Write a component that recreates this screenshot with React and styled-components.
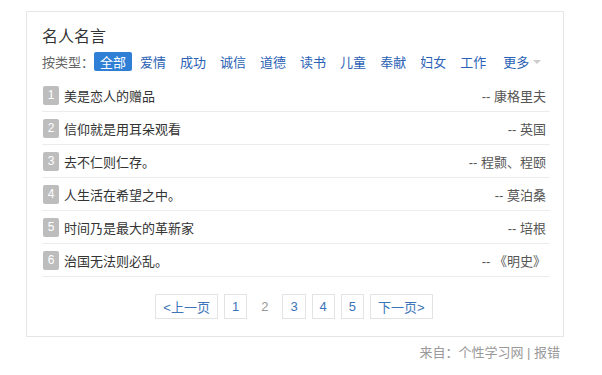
import styled, { createGlobalStyle } from "styled-components";

const quotes = [
  { text: "美是恋人的赠品", author: "-- 康格里夫" },
  { text: "信仰就是用耳朵观看", author: "-- 英国" },
  { text: "去不仁则仁存。", author: "-- 程颢、程颐" },
  { text: "人生活在希望之中。", author: "-- 莫泊桑" },
  { text: "时间乃是最大的革新家", author: "-- 培根" },
  { text: "治国无法则必乱。", author: "-- 《明史》" },
];

const types = ["全部", "爱情", "成功", "诚信", "道德", "读书", "儿童", "奉献", "妇女", "工作"];

const pages = [
  { label: "<上一页", link: true },
  { label: "1", link: true },
  { label: "2", link: false },
  { label: "3", link: true },
  { label: "4", link: true },
  { label: "5", link: true },
  { label: "下一页>", link: true },
];

const App = () => {
  return (
    <Page>
      <GlobalStyle />
      <Card>
        <Title>名人名言</Title>
        <Filter>
          <span className="label">按类型：</span>
          {types.map((t, i) => (
            <TypeItem key={t} $active={i === 0}>
              {t}
            </TypeItem>
          ))}
          <TypeItem $more>
            更多<Caret />
          </TypeItem>
        </Filter>
        <List>
          {quotes.map((q, i) => (
            <Row key={i}>
              <Badge>{i + 1}</Badge>
              <span className="text">{q.text}</span>
              <span className="author">{q.author}</span>
            </Row>
          ))}
        </List>
        <Pager>
          {pages.map((p) => (
            <PageBtn key={p.label} $link={p.link}>
              {p.label}
            </PageBtn>
          ))}
        </Pager>
      </Card>
      <Footer>来自：个性学习网 | 报错</Footer>
    </Page>
  );
};

const GlobalStyle = createGlobalStyle`
  body {
    margin: 0;
    background: #fff;
    font-family: "Liberation Sans", "Noto Sans CJK SC", sans-serif;
  }
`;

const Page = styled.div`
  width: 538px;
  padding: 11px 0 0 26px;
`;

const Card = styled.div`
  border: 1px solid #e6e6e6;
  padding: 14px 13px 17px 15px;
`;

const Title = styled.h2`
  margin: 0;
  font-size: 16px;
  font-weight: normal;
  line-height: 22px;
  color: #333;
`;

const Filter = styled.div`
  display: flex;
  align-items: center;
  margin-top: 4px;
  height: 19px;
  font-size: 13px;
  .label {
    color: #666;
  }
`;

const TypeItem = styled.span`
  display: flex;
  align-items: center;
  height: 19px;
  padding: 0 6px;
  margin-right: 2px;
  margin-left: ${(p) => (p.$more ? "3px" : "0")};
  border-radius: 2px;
  color: ${(p) => (p.$active ? "#fff" : "#2b62b5")};
  background: ${(p) => (p.$active ? "#2f7fd6" : "transparent")};
`;

const Caret = styled.i`
  display: inline-block;
  margin-left: 4px;
  border-left: 4px solid transparent;
  border-right: 4px solid transparent;
  border-top: 4px solid #ccc;
`;

const List = styled.div`
  margin-top: 8px;
`;

const Row = styled.div`
  display: flex;
  align-items: center;
  height: 33px;
  box-sizing: border-box;
  border-bottom: 1px solid #ececec;
  font-size: 13px;
  .text {
    flex: 1;
    margin-left: 5px;
    color: #333;
  }
  .author {
    margin-right: 4px;
    color: #555;
  }
`;

const Badge = styled.span`
  display: flex;
  align-items: center;
  justify-content: center;
  width: 16px;
  height: 19px;
  margin-left: 1px;
  border-radius: 2px;
  background: #bdbdbd;
  color: #fff;
  font-size: 12px;
`;

const Pager = styled.div`
  display: flex;
  justify-content: center;
  gap: 6px;
  margin-top: 17px;
  padding-right: 4px;
`;

const PageBtn = styled.span`
  display: flex;
  align-items: center;
  height: 25px;
  box-sizing: border-box;
  padding: 0 7px;
  min-width: 22px;
  justify-content: center;
  font-size: 13px;
  border: 1px solid ${(p) => (p.$link ? "#e3e3e3" : "transparent")};
  color: ${(p) => (p.$link ? "#3b74b8" : "#999")};
`;

const Footer = styled.div`
  margin-top: 5px;
  padding-right: 4px;
  text-align: right;
  font-size: 13px;
  color: #999;
`;

export default App;
